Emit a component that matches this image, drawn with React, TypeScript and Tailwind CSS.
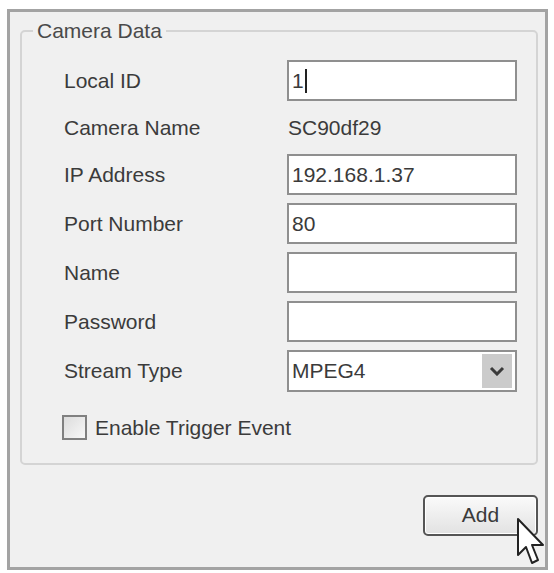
import React from "react";

const font = { fontFamily: '"Liberation Sans", Arial, sans-serif' };

function Field({ label, value, cursor }: { label: string; value?: string; cursor?: boolean }) {
  return (
    <div className="flex items-center h-[41px]">
      <div className="w-[265px] pl-[42px]">{label}</div>
      <div className="w-[230px] h-[41px] border-2 border-[#8f8f8f] bg-white flex items-center pl-[3px] text-[#3a3a3a]">
        {value}
        {cursor && <span className="inline-block w-[2px] h-[24px] bg-[#222] ml-[1px]" />}
      </div>
    </div>
  );
}

export default function App() {
  return (
    <div className="w-[554px] h-[573px] bg-white pt-[9px] pl-[7px]" style={font}>
      <div className="relative w-[541px] h-[561px] border-[3px] border-[#a3a3a3] bg-[#f0f0f0] text-[21px] text-[#3b3b3b] flex flex-col">
        <fieldset className="ml-[10px] mr-[7px] mt-[7px] border-2 border-[#d4d4d4] rounded-[5px] pt-[17px] pb-[19px]">
          <legend className="ml-[11px] px-[4px] leading-[24px] text-[#4a4a4a]">Camera Data</legend>
          <div className="flex flex-col gap-2">
            <Field label="Local ID" value="1" cursor />
            <div className="flex items-center h-[37px]">
              <div className="w-[265px] pl-[42px]">Camera Name</div>
              <div className="pl-[1px]">SC90df29</div>
            </div>
            <Field label="IP Address" value="192.168.1.37" />
            <Field label="Port Number" value="80" />
            <Field label="Name" />
            <Field label="Password" />
            <div className="flex items-center h-[42px]">
              <div className="w-[265px] pl-[42px]">Stream Type</div>
              <div className="w-[230px] h-[42px] border-2 border-[#8f8f8f] bg-white flex items-center pl-[3px] pr-[3px]">
                <span className="flex-1">MPEG4</span>
                <div className="w-[30px] h-[34px] bg-[#cbcbcb] flex items-center justify-center">
                  <svg width="16" height="10" viewBox="0 0 16 10">
                    <path d="M2 2 L8 8 L14 2" fill="none" stroke="#3a3a3a" strokeWidth="3" />
                  </svg>
                </div>
              </div>
            </div>
          </div>
          <div className="flex items-center mt-[20px] pl-[40px] gap-[8px]">
            <div className="w-[25px] h-[25px] border-2 border-[#808080] bg-gradient-to-br from-[#dcdcdc] to-[#f8f8f8]" />
            <span>Enable Trigger Event</span>
          </div>
        </fieldset>
        <div className="flex justify-end mr-[7px] mt-[30px]">
          <div className="w-[115px] h-[41px] border-2 border-[#555] rounded-[5px] bg-gradient-to-b from-[#fafafa] to-[#e2e2e2] flex items-center justify-center text-[#3a3a3a] shadow-[inset_0_0_0_1px_#ffffff]">
            Add
          </div>
        </div>
        <svg className="absolute left-[506px] top-[505px]" width="30" height="50" viewBox="0 0 30 50">
          <path
            d="M2 2 L2 38 L10 30 L16 46 L22 43 L16 28 L27 28 Z"
            fill="#ffffff"
            stroke="#222"
            strokeWidth="2"
            strokeLinejoin="round"
          />
        </svg>
      </div>
    </div>
  );
}
